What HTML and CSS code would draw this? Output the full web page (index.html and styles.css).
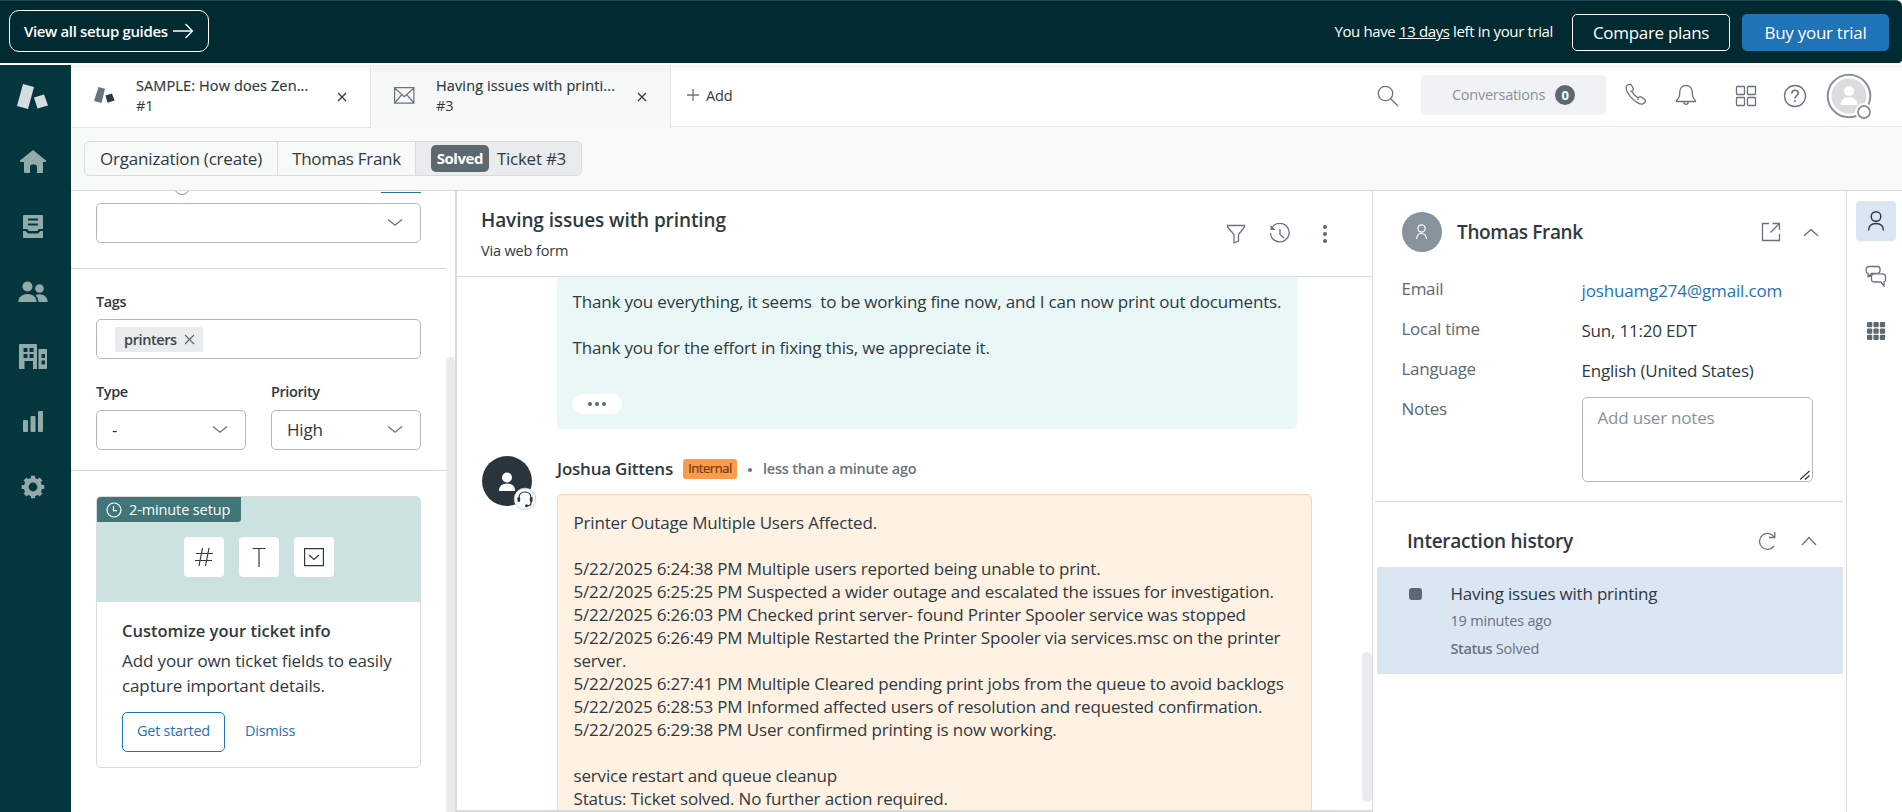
FILE: index.html
```html
<!DOCTYPE html>
<html lang="en">
<head>
<meta charset="utf-8">
<title>Having issues with printing</title>
<link rel="stylesheet" href="styles.css">
</head>
<body>
<header class="trial">
  <a class="guides"><span>View all setup guides</span><svg width="21" height="16" viewBox="0 0 21 16"><path d="M0 8h19M12.500 1l7 7-7 7"/></svg></a>
  <div class="trial-right">
    <span class="trial-msg">You have <u>13 days</u> left in your trial</span>
    <a class="btn-plans">Compare plans</a>
    <a class="btn-buy">Buy your trial</a>
  </div>
</header>
<div class="app">
  <nav class="side">
    <svg class="logo" width="32" height="28" viewBox="0 0 32 28"><path d="M6 1l11 3-6 22-11-3zM17 14.500l10-3 4 11-10.500 3z" fill="#d5dde0"/></svg>
    <svg class="s-home" width="28" height="24" viewBox="0 0 28 24"><path d="M14 0L27 10.500q.8 1.500-1 1.500h-2v10q0 1-1 1h-5v-6q0-2.500-2.500-2.500h-2Q11 14.500 11 17v6H6q-1 0-1-1V12H2q-1.800 0-1-1.500z"/></svg>
    <svg class="s-inbox" width="22" height="24" viewBox="0 0 22 24"><path fill-rule="evenodd" d="M2 0h18q1 0 1 1v13h-4l-2 2H7l-2-2H1V1q0-1 1-1zm4 3.500v2h10v-2zm0 5v2h10v-2zM1 16h2.500l2.500 2.500h10l2.500-2.500H21v6q0 1-1 1H2q-1 0-1-1z"/></svg>
    <svg class="s-people" width="30" height="22" viewBox="0 0 30 22"><circle cx="9.500" cy="5.500" r="5"/><circle cx="21.500" cy="7.500" r="4.300"/><path d="M.5 21v-1.500Q2 13 9.500 13t9 6.500V21zM20.500 21q0-4-3-6.500 1.500-1.300 4-1.300 6.500 0 8 6V21z"/></svg>
    <svg class="s-org" width="29" height="26" viewBox="0 0 29 26"><path fill-rule="evenodd" d="M1 0h16q1 0 1 1v24h-4v-8H5.500v8H0V1q0-1 1-1zm3.500 4v4h4V4zm6 0v4h4V4zm-6 6v4h4v-4zm6 0v4h4v-4zM19.500 5H27q1 0 1 1v18q0 1-1 1h-7.500zm3 5v4h3.500v-4zm0 6.500v4h3.500v-4z"/></svg>
    <svg class="s-bars" width="22" height="22" viewBox="0 0 22 22"><rect x="1" y="9" width="5" height="12" rx="1"/><rect x="8.500" y="5" width="5" height="16" rx="1"/><rect x="16" y="0" width="5" height="21" rx="1"/></svg>
    <svg class="s-gear" width="24" height="24" viewBox="0 0 24 24"><circle cx="12" cy="12" r="6.800" fill="none" stroke="#93aaab" stroke-width="4.800"/><g stroke="#93aaab" stroke-width="4.200"><path d="M12 .7v3.500M12 19.800v3.500M.7 12h3.500M19.800 12h3.500M4 4l2.300 2.300M17.700 17.700L20 20M4 20l2.300-2.300M17.700 6.300L20 4"/></g></svg>
  </nav>
  <main class="main">
    <div class="tabs">
      <div class="tab">
        <svg class="tab-ic" width="21" height="17" viewBox="0 0 21 17"><path d="M4.500 0l6.500 1.800L7.500 16 0 14z" fill="#68737d"/><path d="M11.500 8.500l6.500-2 2.500 7-7 2.300z" fill="#2f3941"/></svg>
        <div class="tab-text"><b>SAMPLE: How does Zen...</b><span>#1</span></div>
        <svg class="x" width="10" height="10" viewBox="0 0 10 10"><path d="M1 1l8 8M9 1L1 9"/></svg>
      </div>
      <div class="tab active">
        <svg class="tab-ic" width="21" height="17" viewBox="0 0 21 17" fill="none" stroke="#68737d" stroke-width="1.200"><path d="M.6.600h19.300v15.600H.6zM.6 1l9.700 8.700L20 1M.6 16l7-8M20 16l-7-8"/></svg>
        <div class="tab-text"><b>Having issues with printi...</b><span>#3</span></div>
        <svg class="x" width="10" height="10" viewBox="0 0 10 10"><path d="M1 1l8 8M9 1L1 9"/></svg>
      </div>
      <div class="tools">
        <span class="add"><svg width="12" height="12" viewBox="0 0 12 12"><path d="M6 0v12M0 6h12"/></svg>Add</span>
        <svg class="ic search" width="22" height="22" viewBox="0 0 22 22"><circle cx="8.500" cy="8.500" r="7.200"/><path d="M14 14l7 7"/></svg>
        <span class="conv">Conversations<b>0</b></span>
        <svg class="ic phone" width="22" height="22" viewBox="0 0 22 22"><path d="M2 2.500C3.500 1 5.500.8 6.500 2.300L8 5c.7 1.300.2 2.300-1.200 3.300 1 2.400 3.500 5 6.200 6.700 1-1.300 2.200-1.700 3.400-.9l3 1.900c1.500 1 1.300 2.700-.2 4-1.800 1.500-4.500 1.200-7.200-.6C7.500 16.500 4.500 13 2.300 9 .8 6.300.7 4 2 2.500zM5.500 8.800l1.500-.9M13.500 15.500l-1 1.500"/></svg>
        <svg class="ic bell" width="22" height="22" viewBox="0 0 22 22"><path d="M11 1.500C7 1.500 4.800 4.500 4.800 8c0 5-1.300 7-3.300 8.700v.8h19v-.8C18.500 15 17.200 13 17.200 8c0-3.500-2.200-6.500-6.200-6.500zM9 18v1.500q2 1.500 4 0V18"/></svg>
        <svg class="ic grid4" width="22" height="22" viewBox="0 0 22 22"><rect x="1.500" y="1.500" width="8" height="8" rx=".8"/><rect x="12.500" y="1.500" width="8" height="8" rx=".8"/><rect x="1.500" y="12.500" width="8" height="8" rx=".8"/><rect x="12.500" y="12.500" width="8" height="8" rx=".8"/></svg>
        <svg class="ic help" width="24" height="24" viewBox="0 0 24 24"><circle cx="12" cy="12" r="10.500"/><path d="M8.800 9.500c0-2.200 1.400-3.300 3.200-3.300s3.200 1.200 3.200 3c0 2.500-3.200 2.500-3.200 5.300" stroke-width="1.600"/><circle cx="12" cy="17" r=".6" stroke-width="1"/></svg>
        <svg class="ava" width="46" height="48" viewBox="0 0 46 48"><circle cx="23" cy="23" r="21.300" fill="#fff" stroke="#87929d" stroke-width="2"/><circle cx="23" cy="23" r="17.500" fill="#dcdcdc"/><circle cx="23" cy="18" r="5" fill="#fff"/><path d="M14.500 32q1-8 8.500-8t8.500 8z" fill="#fff"/><circle cx="38" cy="39" r="9" fill="#fff"/><circle cx="38" cy="39" r="6" fill="#fff" stroke="#87929d" stroke-width="1.800"/></svg>
      </div>
    </div>
    <div class="crumbs-bar">
      <div class="crumbs"><span class="c1">Organization (create)</span><span class="c2">Thomas Frank</span><span class="c3"><b>Solved</b>Ticket #3</span></div>
    </div>
    <div class="cols">
      <section class="fields">
        <div class="fields-body">
          <div class="cut"><i></i><em></em></div>
          <div class="select wide"><svg class="chev" width="16" height="9" viewBox="0 0 16 9"><path d="M1 1.500l7 5.700 7-5.700"/></svg></div>
          <hr class="h1">
          <label>Tags</label>
          <div class="select tags"><span class="chip">printers<svg width="11" height="11" viewBox="0 0 11 11"><path d="M1 1l9 9M10 1l-9 9"/></svg></span></div>
          <div class="pair">
            <div><label>Type</label><div class="select">-<svg class="chev" width="16" height="9" viewBox="0 0 16 9"><path d="M1 1.500l7 5.700 7-5.700"/></svg></div></div>
            <div><label>Priority</label><div class="select">High<svg class="chev" width="16" height="9" viewBox="0 0 16 9"><path d="M1 1.500l7 5.700 7-5.700"/></svg></div></div>
          </div>
          <hr class="h2">
          <div class="card">
            <div class="hero">
              <span class="setup"><svg width="16" height="16" viewBox="0 0 16 16"><circle cx="8" cy="8" r="7"/><path d="M7.500 4v4.700h3.500"/></svg>2-minute setup</span>
              <div class="tiles">
                <span><svg width="20" height="20" viewBox="0 0 20 20"><path d="M8.500 1l-3.500 18M15 1l-3.500 18M2 6.500h17M1 13.500h17"/></svg></span>
                <span><svg width="20" height="20" viewBox="0 0 20 20"><path d="M3.500 1.500h13M10 1.500V20"/></svg></span>
                <span><svg width="20" height="20" viewBox="0 0 20 20"><path d="M.6 1.600h18.800v17H.600zM5 8l5 4.500L15 8"/></svg></span>
              </div>
            </div>
            <div class="card-body">
              <h3>Customize your ticket info</h3>
              <p>Add your own ticket fields to easily<br>capture important details.</p>
              <div class="acts"><a class="start">Get started</a><a>Dismiss</a></div>
            </div>
          </div>
        </div>
        <div class="sbar"></div>
      </section>
      <section class="convo">
        <div class="convo-head">
          <div><h1>Having issues with printing</h1><p>Via web form</p></div>
          <div class="head-ics">
            <svg class="ic" width="20" height="20" viewBox="0 0 20 20"><path d="M1.500 1.500h17v1.500l-6 7.500v6.500l-4.500 1.800V10.500L1.500 3z"/></svg>
            <svg class="ic" width="22" height="22" viewBox="0 0 22 22"><path d="M3 4.500A9.300 9.300 0 1 1 1.500 10M11 6v5.500l4 3.500"/><path d="M1.500 2v5h5z" fill="#68737d" stroke="none"/></svg>
            <svg width="22" height="20" viewBox="0 0 22 20" fill="#5c6970"><circle cx="11" cy="3" r="2"/><circle cx="11" cy="10" r="2"/><circle cx="11" cy="17" r="2"/></svg>
          </div>
        </div>
        <div class="thread">
          <div class="thread-in">
            <div class="msg-green">Thank you everything, it seems &nbsp;to be working fine now, and I can now print out documents.<br><br>Thank you for the effort in fixing this, we appreciate it.<span class="pill"><i></i><i></i><i></i></span></div>
            <div class="reply">
              <svg class="who" width="56" height="54" viewBox="0 0 56 54"><circle cx="25" cy="25" r="25" fill="#2a343c"/><circle cx="25" cy="21.500" r="5" fill="#fff"/><path d="M17 35q0-7.500 8-7.500t8 7.500z" fill="#fff"/><circle cx="43" cy="43" r="10.800" fill="#f8f9f9" stroke="#c9d0d5" stroke-width=".8"/><path d="M37 43v-1q0-6 6-6t6 6v5q0 3-4.500 3" fill="none" stroke="#2a343c" stroke-width="1.200"/><rect x="35.500" y="41" width="2.600" height="5" rx="1.300" fill="#2a343c"/><rect x="47.900" y="41" width="2.600" height="5" rx="1.300" fill="#2a343c"/><circle cx="44.500" cy="49.700" r="1.500" fill="#2a343c"/></svg>
              <div class="reply-col">
                <div class="meta"><b>Joshua Gittens</b><span class="tag">Internal</span><i></i><time>less than a minute ago</time></div>
                <div class="msg-note">Printer Outage Multiple Users Affected.<br><br>5/22/2025 6:24:38 PM Multiple users reported being unable to print.<br>5/22/2025 6:25:25 PM Suspected a wider outage and escalated the issues for investigation.<br>5/22/2025 6:26:03 PM Checked print server- found Printer Spooler service was stopped<br>5/22/2025 6:26:49 PM Multiple Restarted the Printer Spooler via services.msc on the printer<br>server.<br>5/22/2025 6:27:41 PM Multiple Cleared pending print jobs from the queue to avoid backlogs<br>5/22/2025 6:28:53 PM Informed affected users of resolution and requested confirmation.<br>5/22/2025 6:29:38 PM User confirmed printing is now working.<br><br>service restart and queue cleanup<br>Status: Ticket solved. No further action required.</div>
              </div>
            </div>
          </div>
          <div class="tbar"></div>
        </div>
      </section>
      <aside class="info">
        <div class="person">
          <svg width="40" height="40" viewBox="0 0 40 40"><circle cx="20" cy="20" r="20" fill="#87929d"/><g fill="none" stroke="#fff" stroke-width="1.200"><circle cx="19.500" cy="16.500" r="3.600"/><path d="M14.500 27q.5-5.500 5-5.500t5 5.500"/></g></svg>
          <h2>Thomas Frank</h2>
          <svg class="ic ext" width="20" height="20" viewBox="0 0 20 20"><path d="M8 1.500H1.500v17h17V12M11.500 1.500h7V8M18.500 1.500l-9 9"/></svg>
          <svg class="chev" width="16" height="9" viewBox="0 0 16 9"><path d="M1 7.700l7-6 7 6"/></svg>
        </div>
        <dl>
          <dt>Email</dt><dd class="link">joshuamg274@gmail.com</dd>
          <dt>Local time</dt><dd>Sun, 11:20 EDT</dd>
          <dt>Language</dt><dd>English (United States)</dd>
          <dt>Notes</dt><dd class="notes">Add user notes<svg width="10" height="10" viewBox="0 0 10 10"><path d="M0 9.500L9.500 1M5 9.500l4.500-4"/></svg></dd>
        </dl>
        <hr>
        <div class="hist-head"><h2>Interaction history</h2>
          <svg class="ic" width="20" height="20" viewBox="0 0 20 20"><path d="M17.500 6.500A8 8 0 1 0 17 15M17.800 1v5.500H12"/></svg>
          <svg class="chev" width="16" height="10" viewBox="0 0 16 10"><path d="M1 9l7-7.500L15 9"/></svg>
        </div>
        <div class="hist"><i></i><div><p class="t">Having issues with printing</p><p>19 minutes ago</p><p class="st"><b>Status</b> Solved</p></div></div>
      </aside>
      <div class="rail">
        <span class="on"><svg width="20" height="22" viewBox="0 0 20 22"><circle cx="10" cy="6.500" r="4.800"/><path d="M2.500 20.500q.3-7 7.500-7t7.500 7"/></svg></span>
        <span><svg class="ic" width="22" height="22" viewBox="0 0 22 22"><path d="M6 11L3 11.700V8.300Q1.200 8 1.200 6V4q0-2.500 2.800-2.500h8.500q2.500 0 2.500 2.300v2q0 2.200-2.500 2.500M3 11.500L6.500 8.500H12"/><path d="M9 8.800h8.500q3 0 3 2.700v3q0 2-1.500 2.300V21l-3.200-4H9.500q-3 0-3-2.500V11.500q0-2.700 2.500-2.700z" fill="#fff"/></svg></span>
        <span><svg width="20" height="20" viewBox="0 0 20 20" fill="#5c6970"><rect x="1" y="1" width="5.300" height="5.300" rx="1"/><rect x="7.400" y="1" width="5.300" height="5.300" rx="1"/><rect x="13.800" y="1" width="5.300" height="5.300" rx="1"/><rect x="1" y="7.400" width="5.300" height="5.300" rx="1"/><rect x="7.400" y="7.400" width="5.300" height="5.300" rx="1"/><rect x="13.800" y="7.400" width="5.300" height="5.300" rx="1"/><rect x="1" y="13.800" width="5.300" height="5.300" rx="1"/><rect x="7.400" y="13.800" width="5.300" height="5.300" rx="1"/><rect x="13.800" y="13.800" width="5.300" height="5.300" rx="1"/></svg></span>
      </div>
    </div>
  </main>
</div>
</body>
</html>
```

FILE: styles.css
```css
* { box-sizing: border-box; }
body {
  margin: 0; width: 1902px; height: 812px; overflow: hidden; background: #fff;
  display: flex; flex-direction: column;
  font: 400 17px/23px "Open Sans", "Noto Sans", sans-serif; letter-spacing: -.18px; color: #2f3941;
}
h1, h2, h3, p, dl, dd { margin: 0; }
svg { display: block; flex: none; }
hr { border: 0; border-top: 1px solid #d3d7da; margin: 0; }

/* trial bar */
.trial {
  height: 63px; flex: none; background: #012b30; border-top: 1px solid #1f4b50;
  border-radius: 0 6px 4px 0; margin-bottom: 2px; color: #fff;
  display: flex; align-items: center; justify-content: space-between; padding: 0 13px 0 9px;
}
.guides {
  width: 200px; height: 42px; border: 1px solid #fff; border-radius: 10px; margin-top: -2px;
  display: flex; align-items: center; padding-left: 14px; gap: 5px; font-size: 15px; font-weight: 600; letter-spacing: -.36px;
}
.guides svg { fill: none; stroke: #fff; stroke-width: 1.300; }
.trial-right { display: flex; align-items: center; }
.trial-msg { font-size: 15px; letter-spacing: -.37px; margin: -1px 19px 0 0; white-space: nowrap; }
.btn-plans, .btn-buy { height: 37px; border-radius: 5px; display: flex; align-items: center; justify-content: center; }
.btn-plans { width: 158px; border: 1px solid #fff; margin-right: 12px; letter-spacing: -.3px; }
.btn-buy { width: 147px; background: #1f73b7; letter-spacing: -.28px; }

.app { flex: 1; min-height: 0; display: flex; }
.side { width: 71px; background: #03363d; flex: none; display: flex; flex-direction: column; align-items: center; padding: 18px 5px 0 0; }
.side svg { fill: #93aaab; }
.s-home { margin-top: 39px; }
.s-inbox { margin-top: 41px; }
.s-people { margin-top: 42px; }
.s-org { margin-top: 41px; }
.s-bars { margin-top: 41px; }
.s-gear { margin-top: 42px; }

.main { flex: 1; min-width: 0; display: flex; flex-direction: column; }
.tabs { height: 63px; flex: none; display: flex; background: linear-gradient(#f4f6f6, #fff 9px); }
.tab { width: 300px; border-right: 1px solid #e3e6e8; border-bottom: 1px solid #e3e6e8; display: flex; padding-left: 23px; }
.tab.active { width: 300px; background: linear-gradient(#f0f3f3, #f7f9f9 9px); border-bottom: 0; }
.tab-ic { margin-top: 22px; }
.tab-text { width: 201px; margin-left: 21px; padding-top: 11px; font-size: 14.500px; line-height: 20px; letter-spacing: 0; display: flex; flex-direction: column; white-space: nowrap; }
.tab-text b { font-weight: 400; letter-spacing: .12px; -webkit-text-stroke: .2px #2f3941; }
.x { margin-top: 27px; fill: none; stroke: #2f3941; stroke-width: 1.300; }
.tools { flex: 1; display: flex; align-items: center; border-bottom: 1px solid #e4e7e9; padding: 0 30px 0 16px; height: 62px; }
.add { display: flex; align-items: center; gap: 7px; font-size: 14.500px; margin-top: -1px; }
.add svg, .ic, .chev { fill: none; stroke: #68737d; stroke-width: 1.300; }
.search { margin: 0 22px 0 auto; }
.conv { width: 185px; height: 40px; margin-top: -2px; border-radius: 5px; background: #f1f2f4; display: flex; align-items: center; justify-content: center; gap: 10px; font-size: 14.500px; letter-spacing: -.25px; color: #87929d; }
.conv b { width: 20px; height: 20px; border-radius: 10px; background: #5c6970; color: #fff; font-size: 13px; line-height: 20px; text-align: center; }
.phone { margin: -3px 0 0 19px; }
.bell { margin: -2px 0 0 28px; }
.grid4 { margin: 0 0 0 38px; }
.help { margin: 0 0 0 26px; }
.ava { margin: 3px 0 0 19px; }

.crumbs-bar { height: 63px; flex: none; background: #f8f9f9; border-bottom: 1px solid #d8dcde; padding: 13px; }
.crumbs { width: 498px; height: 35px; border: 1px solid #d8dcde; border-radius: 5px; display: flex; overflow: hidden; }
.crumbs span { display: flex; align-items: center; justify-content: center; border-right: 1px solid #d8dcde; }
.crumbs .c1 { width: 193px; letter-spacing: -.2px; }
.crumbs .c2 { width: 138px; letter-spacing: -.3px; }
.crumbs .c3 { flex: 1; background: #e9ebed; border: 0; gap: 8px; letter-spacing: -.25px; }
.crumbs b { width: 58px; height: 27px; border-radius: 5px; background: #5c6970; color: #fff; font-size: 15px; line-height: 26px; letter-spacing: -.45px; text-align: center; }

.cols { flex: 1; min-height: 0; display: flex; }
/* ticket fields */
.fields { width: 386px; border-right: 2px solid #d8dcde; display: flex; flex: none; }
.fields-body { width: 375px; }
.cut { height: 12px; overflow: hidden; position: relative; }
.cut i { position: absolute; left: 103px; top: -12px; width: 16px; height: 16px; border: 1px solid #87929d; border-radius: 8px; }
.cut em { position: absolute; left: 310px; top: 0; width: 40px; height: 2px; border-bottom: 1px solid #336f9f; }
.select { height: 40px; border: 1px solid #b0b8be; border-radius: 5px; display: flex; align-items: center; justify-content: space-between; padding: 0 17px 2px 15px; }
.wide, .tags { margin: 0 25px; }
.tags { padding-bottom: 0; }
.wide { justify-content: flex-end; }
.h1 { margin-top: 25px; }
.fields label { display: block; height: 50px; padding-top: 21px; margin-left: 25px; font-size: 14.500px; font-weight: 600; letter-spacing: -.4px; }
.chip { height: 25px; background: #e9ebed; border-radius: 2px; display: flex; align-items: center; gap: 7px; padding: 0 8px 0 9px; margin-left: 3px; font-size: 14.500px; letter-spacing: -.4px; font-weight: 600; color: #3a444c; }
.chip svg { fill: none; stroke: #5c6970; stroke-width: 1.200; }
.pair { display: flex; gap: 25px; margin: 0 25px; }
.pair > div { width: 150px; }
.pair label { margin: 0; height: 51px; }
.h2 { margin-top: 20px; }
.card { width: 325px; height: 272px; margin: 25px 0 0 25px; border: 1px solid #d8dcde; border-radius: 5px; overflow: hidden; }
.hero { height: 105px; background: #cce2e0; }
.setup { width: 144px; height: 25px; background: #417679; color: #fff; border-radius: 0 0 3px 0; display: flex; align-items: center; gap: 7px; padding-left: 9px; font-size: 14.500px; letter-spacing: -.12px; }
.setup svg { fill: none; stroke: #fff; stroke-width: 1.200; }
.tiles { display: flex; gap: 15px; justify-content: center; padding-top: 15px; }
.tiles span { width: 40px; height: 40px; background: #fff; border-radius: 4px; display: grid; place-items: center; }
.tiles svg { fill: none; stroke: #2f3941; stroke-width: 1.200; }
.card-body { padding: 17px 25px; }
.card h3 { font-size: 16.500px; line-height: 24px; font-weight: 600; letter-spacing: 0; }
.card p { line-height: 25px; padding-top: 5px; letter-spacing: -.12px; white-space: nowrap; }
.acts { display: flex; align-items: center; gap: 20px; margin-top: 14px; font-size: 14.500px; line-height: 20px; letter-spacing: -.27px; color: #1f73b7; }
.acts a { padding-bottom: 2px; }
.start { width: 103px; height: 40px; border: 1px solid #1f73b7; border-radius: 5px; display: grid; place-items: center; }
.sbar { width: 9px; margin-top: 166px; background: #e9ebed; border-radius: 5px 5px 0 0; }

/* conversation */
.convo { width: 916px; flex: none; display: flex; flex-direction: column; border-right: 1px solid #d8dcde; border-bottom: 2px solid #d8dcde; }
.convo-head { height: 86px; flex: none; border-bottom: 1px solid #d8dcde; display: flex; justify-content: space-between; padding: 17px 36px 0 24px; }
h1 { font-size: 19px; line-height: 25px; font-weight: 600; letter-spacing: -.09px; }
.convo-head p { font-size: 14.500px; line-height: 22px; margin-top: 7px; letter-spacing: -.15px; }
.head-ics { display: flex; gap: 23px; align-items: center; height: 51px; }
.thread { flex: 1; min-height: 0; display: flex; justify-content: space-between; overflow: hidden; }
.thread-in { width: 855px; }
.msg-green { width: 740px; height: 152px; margin-left: 100px; padding: 13px 15.500px; background: #eaf7f7; border-radius: 0 0 5px 5px; letter-spacing: -.18px; white-space: nowrap; }
.pill { display: flex; width: 50px; height: 20px; margin: 35px 0 0 -1px; border-radius: 10px; background: #fff; align-items: center; justify-content: center; gap: 3px; }
.pill i { width: 4px; height: 4px; border-radius: 2px; background: #5c6970; }
.reply { display: flex; margin: 27px 0 0 25px; gap: 19px; }
.meta { height: 38px; display: flex; padding-top: 2px; align-items: flex-start; white-space: nowrap; }
.meta b { font-weight: 600; letter-spacing: -.22px; width: 126px; margin-top: -1px; }
.tag { width: 54px; height: 20px; border-radius: 3px; background: #fb9d48; color: #703815; font-size: 13px; line-height: 19px; letter-spacing: -.45px; text-align: center; margin-top: 1px; -webkit-text-stroke: .2px #703815; }
.meta i { width: 4px; height: 4px; border-radius: 2px; background: #68737d; margin: 10px 11px 0; }
.meta time { font-size: 14.500px; font-weight: 600; letter-spacing: -.22px; color: #68737d; margin-top: -1px; }
.msg-note { width: 755px; height: 340px; border: 1px solid #fbd7a5; border-radius: 5px; background: #fff2e3; padding: 16px 15.500px; letter-spacing: -.17px; white-space: nowrap; }
.tbar { width: 10px; height: 150px; margin-top: 375px; border-radius: 5px; background: #e9ebed; }

/* customer info */
.info { width: 473px; flex: none; }
.person { display: flex; align-items: center; height: 40px; margin: 21px 27px 0 29px; }
h2 { font-size: 19px; font-weight: 600; line-height: 25px; letter-spacing: -.35px; margin-right: auto; padding-top: 1px; }
.person h2 { margin-left: 15px; }
.ext { margin-right: 22px; }
dl { display: grid; grid-template-columns: 180px 231px; grid-template-rows: 40px 40px 40px 85px; margin: 25px 0 0 28.500px; }
dt { color: #5c6970; letter-spacing: -.28px; }
dd { padding-top: 2px; letter-spacing: -.2px; }
.link { color: #1f73b7; letter-spacing: -.15px; }
.notes { position: relative; border: 1px solid #b0b8be; border-radius: 5px; padding: 8px 15px; color: #87929d; }
.notes svg { position: absolute; right: 2px; bottom: 1px; stroke: #2f3941; stroke-width: 1.300; }
.info hr { margin: 19px 3px 0 2px; }
.hist-head { display: flex; align-items: center; margin: 25px 29px 0 34px; height: 27px; }
.hist-head h2 { letter-spacing: -.24px; }
.hist-head .ic { margin-right: 24px; }
.hist { margin: 13px 3px 0 4px; height: 107px; background: #dae6f2; display: flex; padding: 15px 32px; gap: 28.500px; }
.hist i { width: 13px; height: 12px; border-radius: 3px; background: #5c6970; margin-top: 6px; }
.hist p { font-size: 14.500px; letter-spacing: -.2px; line-height: 20px; color: #68737d; }
.hist .t { font-size: 17px; line-height: 24px; letter-spacing: -.2px; color: #2f3941; padding-bottom: 5px; }
.hist .st { margin-top: 8px; }
.hist b { font-weight: 600; letter-spacing: -.4px; }

.rail { flex: 1; border-left: 1px solid #d8dcde; padding: 10px 0 0 9px; display: flex; flex-direction: column; gap: 15px; }
.rail span { width: 40px; height: 40px; border-radius: 4px; display: grid; place-items: center; }
.rail .on { background: #dae6f2; }
.on svg { fill: none; stroke: #2f3941; stroke-width: 1.400; }
```
